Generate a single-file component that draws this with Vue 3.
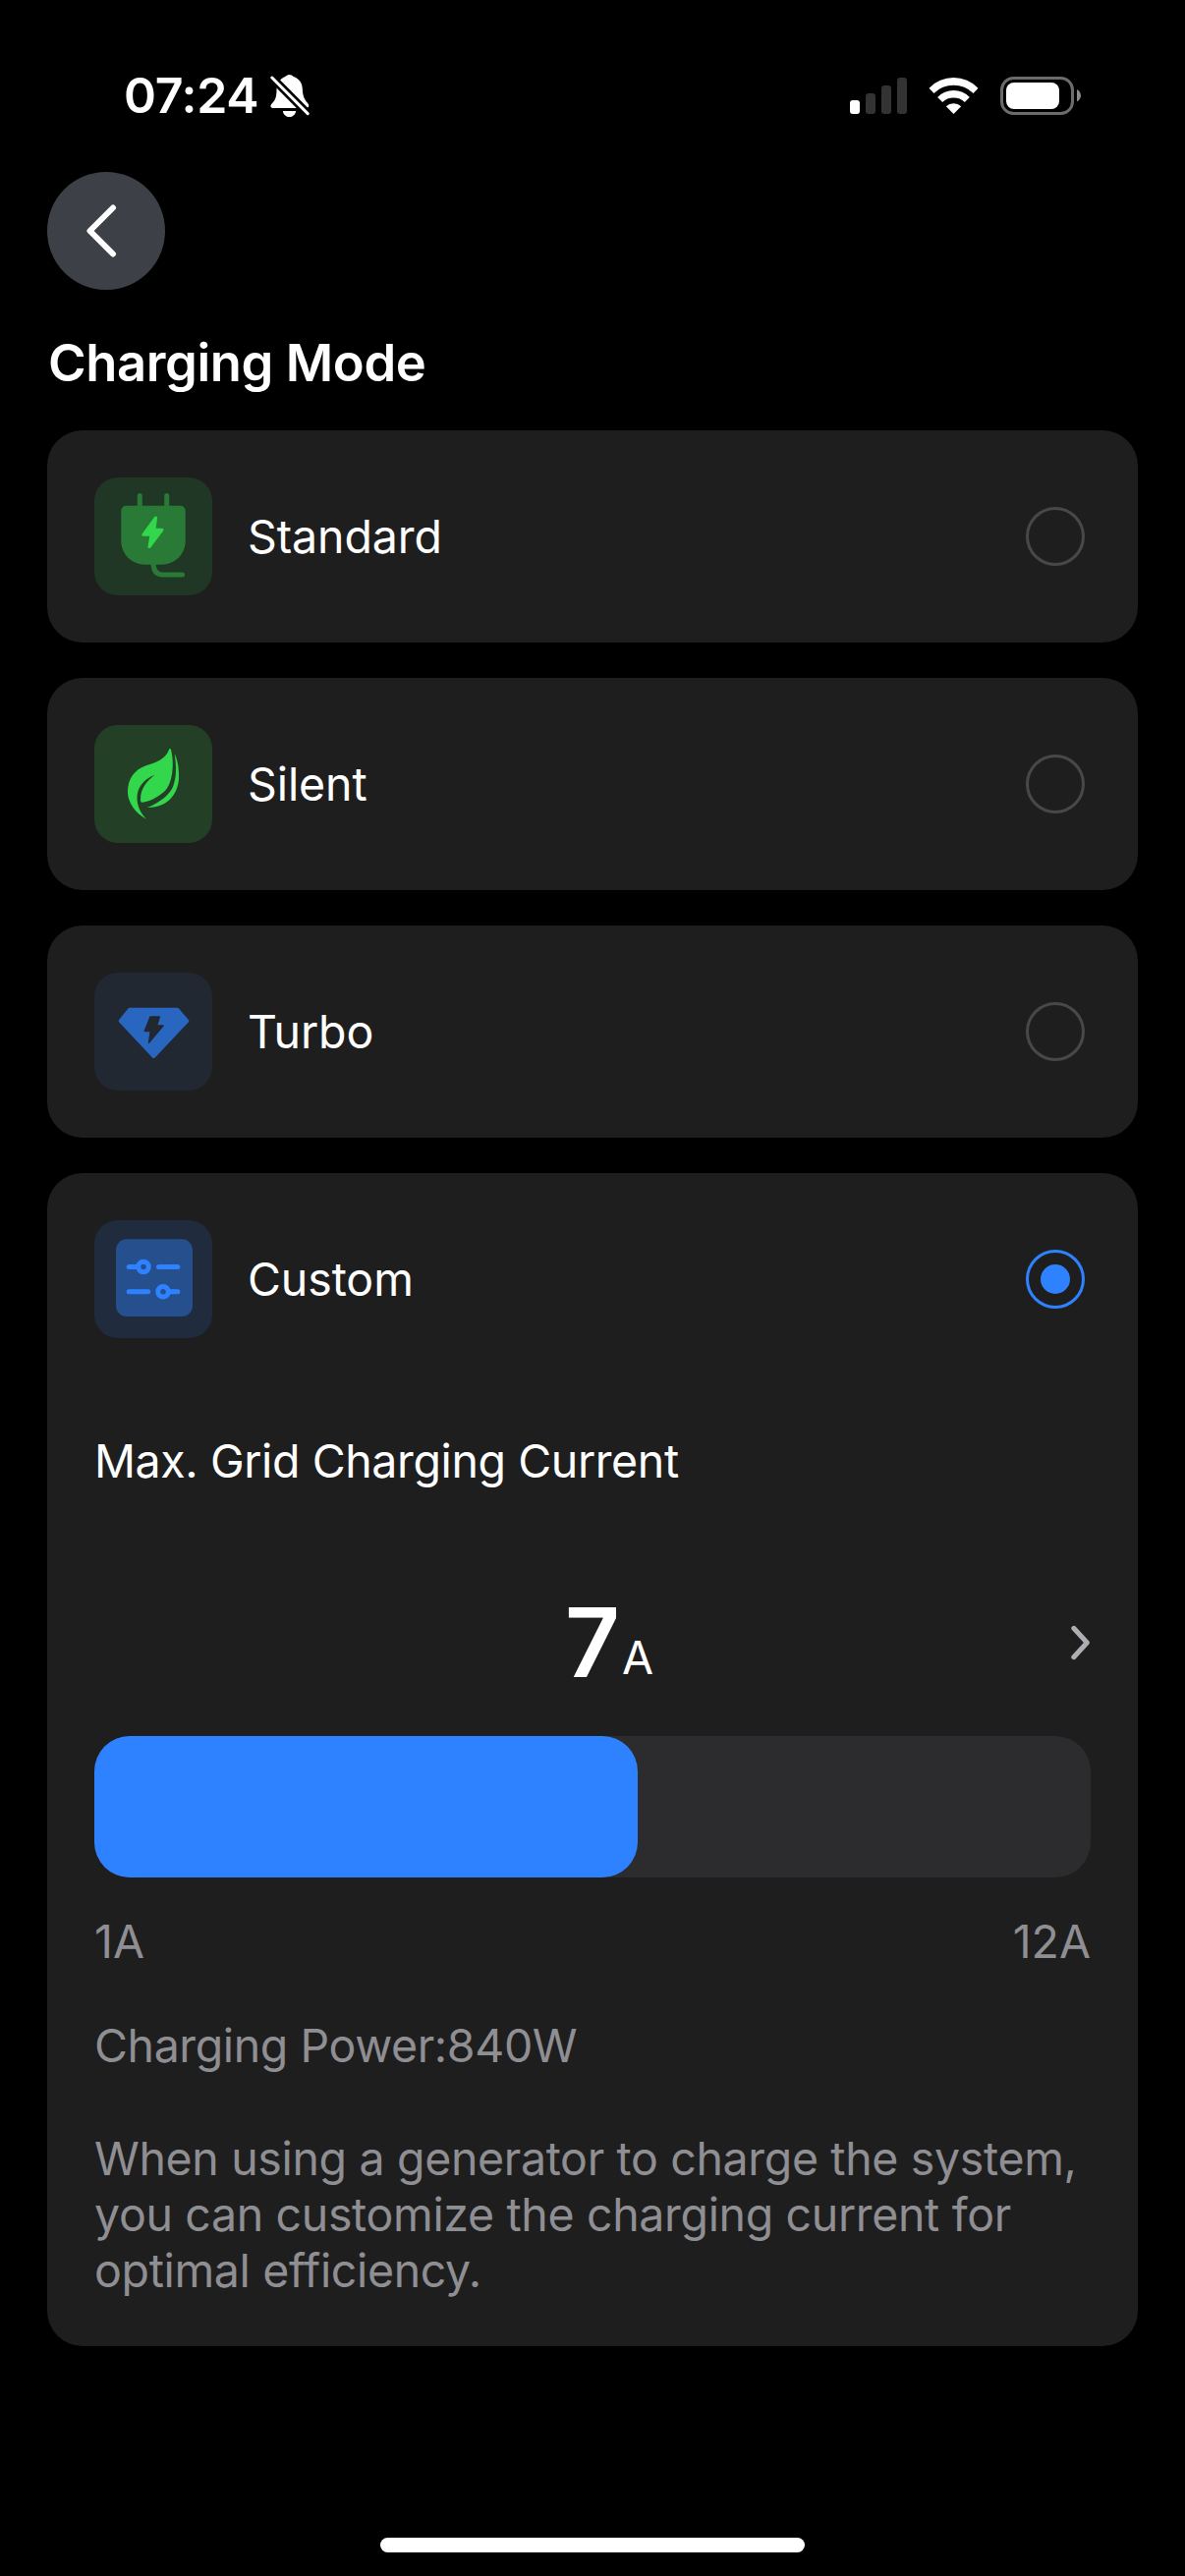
<script setup>
import { ref, computed } from 'vue'

const modes = [
  { id: 'standard', label: 'Standard' },
  { id: 'silent', label: 'Silent' },
  { id: 'turbo', label: 'Turbo' },
  { id: 'custom', label: 'Custom' }
]

const selected = ref('custom')

const min = 1
const max = 12
const current = ref(7)

const fillWidth = computed(() => ((current.value - min) / (max - min)) * 100 + '%')
const power = computed(() => current.value * 120)
</script>

<template>
  <div class="screen">
    <header class="status-bar">
      <span class="time">07:24</span>
      <svg class="bell" viewBox="0 0 119 129">
        <path d="M45 6Q58 -6 71 6C90 14 98 28 98 45C99 66 104 76 114 87Q122 97 112 102H6Q-3 99 3 90C16 78 19 68 19 45C19 28 28 14 45 6Z" fill="#fff" />
        <path d="M38 111H78C74 135 42 135 38 111Z" fill="#fff" />
        <path d="M-8 -4L126 131" stroke="#000" stroke-width="25" />
        <path d="M5 9L114 119" stroke="#fff" stroke-width="9" stroke-linecap="round" />
      </svg>
      <svg class="signal" viewBox="0 0 58 37">
        <rect x="0" y="23" width="10" height="14" rx="3" fill="#fff" />
        <rect x="16" y="16" width="10" height="21" rx="3" fill="#333" />
        <rect x="32" y="8" width="10" height="29" rx="3" fill="#333" />
        <rect x="48" y="0" width="10" height="37" rx="3" fill="#333" />
      </svg>
      <svg class="wifi" viewBox="0 0 152 111">
        <g fill="#fff">
          <path d="M1 32A104 104 0 0 1 151 32L136 48A84.5 84.5 0 0 0 16 48Z" />
          <path d="M27 60A68 68 0 0 1 125 60L110 75A50 50 0 0 0 42 75Z" />
          <path d="M53 88A34 34 0 0 1 99 88L76 111Z" />
        </g>
      </svg>
      <svg class="battery" viewBox="0 0 82 39">
        <rect x="1.5" y="1.5" width="72" height="36" rx="12" fill="none" stroke="#6b6b6b" stroke-width="3" />
        <rect x="6" y="6" width="54" height="27" rx="8" fill="#fff" />
        <path d="M78 13C83.300 16 83.300 22.500 78 25.500Z" fill="#8a8a8a" />
      </svg>
    </header>

    <button class="back" aria-label="Back">
      <svg viewBox="0 0 120 120">
        <path d="M67 36.500L43.500 60L67 83.500" fill="none" stroke="#fff" stroke-width="6" stroke-linecap="round" stroke-linejoin="round" />
      </svg>
    </button>

    <h1 class="title">Charging Mode</h1>

    <main class="modes">
      <section v-for="mode in modes" :key="mode.id" class="card">
        <div class="mode-row" @click="selected = mode.id">
          <div class="mode-icon" :class="mode.id">
            <!-- Plug -->
            <svg v-if="mode.id === 'standard'" viewBox="0 0 120 120">
              <g fill="none" stroke="#297a36" stroke-width="5" stroke-linecap="round">
                <path d="M46.300 18.500V30" />
                <path d="M73.700 18.500V30" />
                <path d="M60 87C60 95 63.500 99 70 99H89.500" />
              </g>
              <path d="M33 28.700H87Q92.700 28.700 92.700 34.500V64.500C92.700 78 82 88.700 68.500 88.700H51.500C38 88.700 27.300 78 27.300 64.500V34.500Q27.300 28.700 33 28.700Z" fill="#297a36" />
              <path d="M62.500 41L61 53.300H69L56 70.500L58 58.300H49.800Z" fill="#32d74b" stroke="#32d74b" stroke-width="3" stroke-linejoin="round" />
            </svg>
            <!-- Leaf -->
            <svg v-else-if="mode.id === 'silent'" viewBox="0 0 120 120">
              <g fill="#32d74b">
                <path d="M76 25C76.500 23.800 77.800 23.800 78 25C79.500 31 80 37 79.700 43C79.300 52 77.500 59 74 64.500C69 71 58 77.500 49 78.700Q47 78.900 47 76.500C46.800 65 53 57 61.700 50.800C50 55 43.500 64 43.500 74C43.500 82 46.800 89.500 53 95.700C42 90 34.300 79 34 69C33.500 55 41 45.500 52 41.500C64 37.500 72 35 76 25Z" />
                <path d="M81.700 29.300C85 36 86.300 45 86 54C85.500 70 74 84.500 54 84C67 78.500 75 72 79.500 64C84 54 83.500 42 81.700 29.300Z" />
              </g>
            </svg>
            <!-- Diamond with bolt -->
            <svg v-else-if="mode.id === 'turbo'" viewBox="0 0 120 120">
              <path d="M36 37.700H84.500L94.300 49.200L60.300 85L26.700 49.200Z" fill="#2866c0" stroke="#2866c0" stroke-width="4" stroke-linejoin="round" />
              <path d="M57 45L66.300 45L63.500 54H70L55.500 71.300L57.300 59.500H51.300Z" fill="#212832" stroke="#212832" stroke-width="1.500" stroke-linejoin="round" />
            </svg>
            <!-- Sliders -->
            <svg v-else viewBox="0 0 120 120">
              <rect x="22" y="19.300" width="78" height="78.700" rx="11" fill="#264f8e" />
              <g fill="none" stroke="#2f82ff" stroke-width="5" stroke-linecap="round">
                <path d="M35.200 47.500H44" />
                <circle cx="50" cy="47.500" r="5.300" />
                <path d="M65.500 47.500H84.800" />
                <path d="M35.200 72.700H54.700" />
                <circle cx="70" cy="72.700" r="5.300" />
                <path d="M76 72.700H84.800" />
              </g>
            </svg>
          </div>
          <span class="mode-label">{{ mode.label }}</span>
          <span class="radio" :class="{ checked: selected === mode.id }"></span>
        </div>

        <div v-if="mode.id === 'custom' && selected === 'custom'" class="custom-panel">
          <h2 class="panel-title">Max. Grid Charging Current</h2>
          <div class="value-row">
            <div class="value">
              <span class="number">{{ current }}</span>
              <span class="unit">A</span>
            </div>
            <svg class="chevron" viewBox="0 0 20 36">
              <path d="M2.800 3.300L16.300 18L2.800 32.700" fill="none" stroke="#aeaeb2" stroke-width="5" stroke-linecap="round" stroke-linejoin="round" />
            </svg>
          </div>
          <div class="slider">
            <div class="fill" :style="{ width: fillWidth }"></div>
          </div>
          <div class="range">
            <span>{{ min }}A</span>
            <span>{{ max }}A</span>
          </div>
          <p class="power">Charging Power:{{ power }}W</p>
          <p class="hint">
            When using a generator to charge the system,<br />
            you can customize the charging current for<br />
            optimal efficiency.
          </p>
        </div>
      </section>
    </main>

    <div class="home-indicator"></div>
  </div>
</template>

<style>
body {
  margin: 0;
  background-color: #000;
}
</style>

<style scoped>
* {
  box-sizing: border-box;
  margin: 0;
  padding: 0;
}

.screen {
  display: flex;
  flex-direction: column;
  width: 1206px;
  height: 2622px;
  padding: 0 48px 24px;
  overflow: hidden;
  background-color: #000;
  color: #fff;
  font-family: Inter, 'Liberation Sans', sans-serif;
  font-size: 46.5px;
  line-height: 57px;
}

svg {
  display: block;
  flex: none;
}

/* Status bar */
.status-bar {
  display: flex;
  align-items: center;
  height: 75px;
  margin: 60px 0 40px;
  padding: 0 58px 0 78px;
}

.time {
  width: 149px;
  font-size: 50px;
  font-weight: 600;
  letter-spacing: -0.3px;
  white-space: nowrap;
}

.bell {
  width: 40px;
  height: 43px;
}

.signal {
  width: 58px;
  height: 37px;
  margin-left: auto;
}

.wifi {
  width: 51px;
  height: 37px;
  margin-left: 22px;
}

.battery {
  width: 82px;
  height: 39px;
  margin-left: 22px;
}

.back {
  flex: none;
  width: 120px;
  height: 120px;
  border: none;
  border-radius: 50%;
  background-color: #3e4048;
  cursor: pointer;
}

.title {
  margin: 42px 0 37px;
  padding-left: 1px;
  font-size: 52.5px;
  font-weight: 600;
  line-height: 64px;
  letter-spacing: -0.4px;
}

/* Mode cards */
.modes {
  display: flex;
  flex-direction: column;
  gap: 36px;
}

.card {
  border-radius: 36px;
  background-color: #1e1e1e;
}

.mode-row {
  display: flex;
  align-items: center;
  height: 216px;
  padding: 0 54px 0 48px;
  cursor: pointer;
}

.mode-icon {
  width: 120px;
  height: 120px;
  border-radius: 24px;
}

.mode-icon.standard {
  background-color: #213725;
}

.mode-icon.silent {
  background-color: #234027;
}

.mode-icon.turbo {
  background-color: #212832;
}

.mode-icon.custom {
  background-color: #202c3e;
}

.mode-label {
  flex: 1;
  margin-left: 36px;
  letter-spacing: -0.1px;
}

.radio {
  display: flex;
  align-items: center;
  justify-content: center;
  width: 60px;
  height: 60px;
  border: 3px solid #48484a;
  border-radius: 50%;
}

.radio.checked {
  border-color: #2f82ff;
}

.radio.checked::after {
  content: '';
  width: 30px;
  height: 30px;
  border-radius: 50%;
  background-color: #2f82ff;
}

/* Custom settings */
.custom-panel {
  padding: 49px 48px 48px;
}

.panel-title {
  font-size: inherit;
  font-weight: 400;
  letter-spacing: -0.4px;
}

.value-row {
  display: grid;
  grid-template-columns: 1fr auto 1fr;
  align-items: center;
  height: 143px;
  margin: 84px 0 24px;
}

.value {
  display: flex;
  grid-column: 2;
  align-items: baseline;
  gap: 2px;
  margin-left: 34px;
}

.number {
  font-size: 97px;
  font-weight: 600;
  line-height: 143px;
}

.unit {
  transform: translateY(-3px);
}

.chevron {
  justify-self: end;
  width: 20px;
  height: 36px;
}

.slider {
  height: 144px;
  border-radius: 36px;
  background-color: #2c2c2e;
}

.fill {
  height: 100%;
  border-radius: 36px;
  background-color: #2f82ff;
}

.range {
  display: flex;
  justify-content: space-between;
  margin: 37px 0 49px;
  color: #8e8e93;
}

.power {
  margin-bottom: 58px;
  color: #8e8e93;
  letter-spacing: -0.4px;
}

.hint {
  color: #8e8e93;
  letter-spacing: -0.35px;
  white-space: nowrap;
}

.home-indicator {
  align-self: center;
  width: 432px;
  height: 15px;
  margin-top: auto;
  border-radius: 8px;
  background-color: #fff;
}
</style>
